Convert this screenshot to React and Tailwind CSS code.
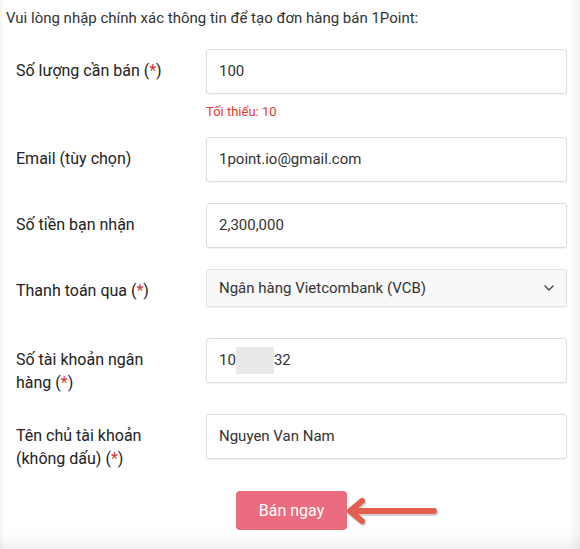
import React from "react";

const Req = () => (
  <>
    (<span className="text-[#e0312f]">*</span>)
  </>
);

const Field = ({ label, children, className = "", labelPad = "pt-[10px]" }) => (
  <div className={`flex items-start ${className}`}>
    <div className={`w-[190px] shrink-0 text-[16px] leading-[23px] text-[#222] ${labelPad}`}>{label}</div>
    <div className="w-[361px]">{children}</div>
  </div>
);

const TextBox = ({ children }) => (
  <div className="flex h-[45px] items-center rounded-[3px] border border-[#dedede] bg-white px-[12px] text-[15px] text-[#333] shadow-[0_1px_1px_rgba(0,0,0,0.06)]">
    {children}
  </div>
);

export default function App() {
  return (
    <div
      className="relative h-[549px] w-[580px] overflow-hidden bg-white text-[#222] shadow-[inset_4px_0_5px_-4px_rgba(0,0,0,0.10),inset_-14px_0_12px_-10px_rgba(0,0,0,0.07),inset_0_-18px_14px_-12px_rgba(0,0,0,0.07)]"
      style={{ fontFamily: "Roboto, 'Noto Sans', sans-serif" }}
    >
      <p className="pl-[6px] pt-[7px] text-[15px] leading-[22px] text-[#333]">
        Vui lòng nhập chính xác thông tin để tạo đơn hàng bán 1Point:
      </p>

      <div className="pl-[16px]">
        <Field label={<>Số lượng cần bán <Req /></>} className="mt-[20px]">
          <TextBox>100</TextBox>
          <p className="mt-[10px] text-[13px] leading-[16px] text-[#e03a34]">Tối thiểu: 10</p>
        </Field>

        <Field label="Email (tùy chọn)" className="mt-[17px]">
          <TextBox>1point.io@gmail.com</TextBox>
        </Field>

        <Field label="Số tiền bạn nhận" className="mt-[21px]">
          <TextBox>2,300,000</TextBox>
        </Field>

        <Field label={<>Thanh toán qua <Req /></>} className="mt-[21px]" labelPad="pt-[10px]">
          <div className="flex h-[38px] items-center justify-between rounded-[2px] border border-[#e2e2e2] bg-[#f8f8f8] pl-[12px] pr-[12px] text-[15px] text-[#333] shadow-[0_1px_1px_rgba(0,0,0,0.05)]">
            <span>Ngân hàng Vietcombank (VCB)</span>
            <svg width="10" height="6" viewBox="0 0 10 6" fill="none" stroke="#444" strokeWidth="1.4" strokeLinecap="round" strokeLinejoin="round">
              <path d="M1 1l4 4 4-4" />
            </svg>
          </div>
        </Field>

        <Field label={<>Số tài khoản ngân<br />hàng <Req /></>} className="mt-[31px]">
          <TextBox>
            <span>10</span>
            <span className="inline-block h-[27px] w-[38px] bg-[#e9e9e9]" />
            <span>32</span>
          </TextBox>
        </Field>

        <Field label={<>Tên chủ tài khoản<br />(không dấu) <Req /></>} className="mt-[20px]">
          <TextBox>Nguyen Van Nam</TextBox>
        </Field>
      </div>

      <div className="mt-[21px] flex justify-center pl-[3px]">
        <div className="relative">
          <button className="h-[39px] w-[111px] rounded-[4px] bg-[#ea6c7e] text-[16px] font-normal text-white">
            Bán ngay
          </button>
          <svg
            className="absolute left-[110px] top-[5px]"
            width="92"
            height="32"
            viewBox="0 0 92 32"
            fill="none"
          >
            <g stroke="rgba(0,0,0,0.18)" strokeWidth="6" strokeLinecap="round" strokeLinejoin="round" transform="translate(1 2)">
              <path d="M88 15H6" />
              <path d="M16 5L4 15l12 10" />
            </g>
            <g stroke="#e35e4e" strokeWidth="6" strokeLinecap="round" strokeLinejoin="round">
              <path d="M88 15H6" />
              <path d="M16 5L4 15l12 10" />
            </g>
          </svg>
        </div>
      </div>
    </div>
  );
}
